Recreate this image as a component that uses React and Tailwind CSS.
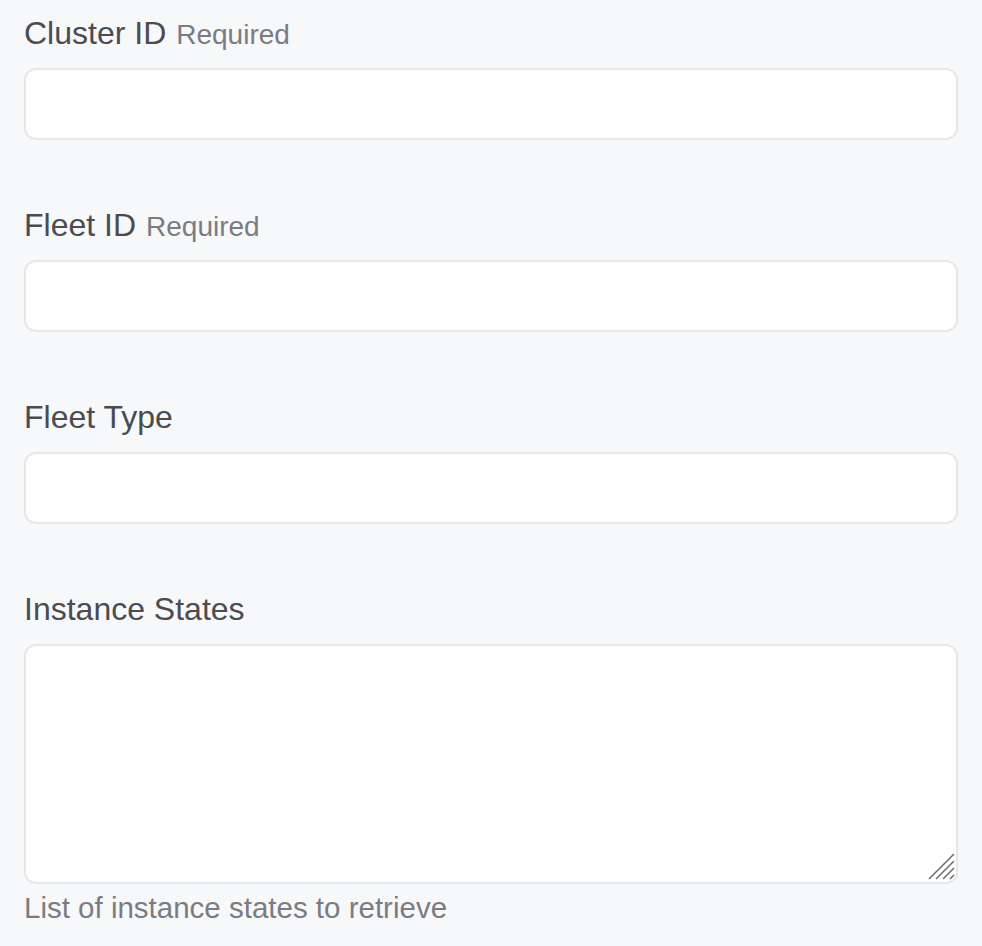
import React from "react";

const font = { fontFamily: '"Liberation Sans", Arial, sans-serif' };

function Label({ children, required }) {
  return (
    <div className="flex h-[40px] items-baseline text-[32px] leading-[40px] text-[#4b4b50]">
      <span>{children}</span>
      {required && <span className="ml-[10px] text-[28px] leading-[40px] text-[#7b7c82]">Required</span>}
    </div>
  );
}

function Field({ label, required }) {
  return (
    <div className="flex flex-col">
      <Label required={required}>{label}</Label>
      <input
        type="text"
        className="mt-[15px] h-[72px] w-full rounded-[12px] border-2 border-[#e6e7ea] bg-white px-4 outline-none"
      />
    </div>
  );
}

export default function App() {
  return (
    <div style={font} className="min-h-[946px] w-full bg-[#f7f8fa] px-[24px] pt-[13px]">
      <div className="flex flex-col gap-[65px]">
        <Field label="Cluster ID" required />
        <Field label="Fleet ID" required />
        <Field label="Fleet Type" />
        <div className="flex flex-col">
          <Label>Instance States</Label>
          <div className="relative mt-[15px] h-[240px] w-full">
            <textarea className="block h-full w-full resize-none rounded-[12px] border-2 border-[#e6e7ea] bg-white px-4 py-3 outline-none" />
            <svg
              className="pointer-events-none absolute right-[3px] bottom-[4px]"
              width="28"
              height="28"
              viewBox="0 0 28 28"
            >
              <g stroke="#6f6f6f" strokeWidth="1.6" strokeLinecap="butt">
                <line x1="2" y1="27" x2="27" y2="2" />
                <line x1="9" y1="27" x2="27" y2="9" />
                <line x1="16" y1="27" x2="27" y2="16" />
                <line x1="23" y1="27" x2="27" y2="23" />
              </g>
            </svg>
          </div>
          <div className="mt-[6px] text-[29.5px] leading-[36px] text-[#7b7c82]">
            List of instance states to retrieve
          </div>
        </div>
      </div>
    </div>
  );
}
